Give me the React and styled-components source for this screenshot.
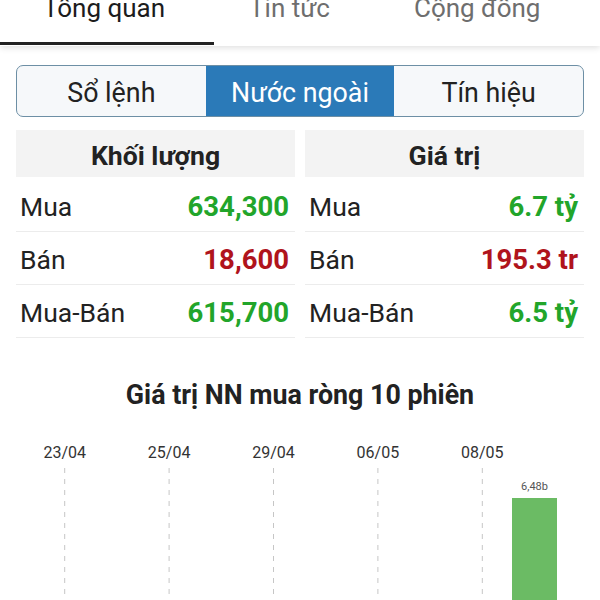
import React from "react";
import styled, { createGlobalStyle, css } from "styled-components";

const GlobalStyle = createGlobalStyle`
  html, body {
    margin: 0;
    padding: 0;
    background: #fff;
  }
  body {
    width: 600px;
    height: 600px;
    overflow: hidden;
    font-family: Roboto, "Noto Sans", "Liberation Sans", sans-serif;
    color: #222;
  }
`;

const TabBar = styled.div`
  position: relative;
  height: 46px;
  display: flex;
  align-items: flex-start;
  gap: 84px;
  padding-left: 43px;
  background: #fff;
  box-shadow: 0 2px 6px rgba(0, 0, 0, 0.12);
  overflow: hidden;
`;

const Tab = styled.div`
  position: relative;
  height: 46px;
  margin-top: -7px;
  font-size: 26px;
  line-height: 30px;
  white-space: nowrap;
  color: ${(props) => (props.active ? "#1c1c1c" : "#6e6e6e")};
  ${(props) =>
    props.active &&
    css`
      &::after {
        content: "";
        position: absolute;
        left: -43px;
        right: -49px;
        bottom: -6px;
        height: 3px;
        background: #222;
      }
    `}
`;

const Segmented = styled.div`
  margin: 19px 16px 0;
  height: 52px;
  box-sizing: border-box;
  border: 1.5px solid #6d8fa5;
  border-radius: 7px;
  overflow: hidden;
  background: #f6f8fa;
  display: grid;
  grid-template-columns: 1fr 1fr 1fr;
`;

const Segment = styled.div`
  display: flex;
  align-items: center;
  justify-content: center;
  padding-top: 3px;
  font-size: 26.8px;
  color: ${(props) => (props.active ? "#fff" : "#222")};
  background: ${(props) => (props.active ? "#2b7ab8" : "transparent")};
`;

const Tables = styled.div`
  margin: 13px 16px 0;
  display: grid;
  grid-template-columns: 1fr 1fr;
  column-gap: 10px;
`;

const Panel = styled.div`
  display: flex;
  flex-direction: column;
`;

const PanelHeader = styled.div`
  height: 47px;
  box-sizing: border-box;
  padding-top: 4px;
  margin-bottom: 2px;
  display: flex;
  align-items: center;
  justify-content: center;
  background: #f3f3f3;
  font-size: 26.6px;
  font-weight: 700;
  color: #222;
`;

const Row = styled.div`
  height: 53px;
  box-sizing: border-box;
  padding: 3px 6px 0 4px;
  display: flex;
  align-items: center;
  justify-content: space-between;
  border-bottom: 1px solid #ececec;
`;

const Label = styled.span`
  font-size: 26.5px;
  color: #222;
`;

const Value = styled.span`
  font-size: 27.5px;
  font-weight: 700;
  color: ${(props) => (props.tone === "up" ? "#22a52a" : "#b0141c")};
`;

const ChartTitle = styled.div`
  margin-top: 42px;
  text-align: center;
  font-size: 26.8px;
  line-height: 30px;
  font-weight: 700;
  color: #222;
`;

const ChartSvg = styled.svg`
  display: block;
  margin-top: 20px;
`;

const tabs = ["Tổng quan", "Tin tức", "Cộng đồng"];
const segments = ["Sổ lệnh", "Nước ngoài", "Tín hiệu"];

const tables = [
  {
    title: "Khối lượng",
    rows: [
      ["Mua", "634,300", "up"],
      ["Bán", "18,600", "down"],
      ["Mua-Bán", "615,700", "up"],
    ],
  },
  {
    title: "Giá trị",
    rows: [
      ["Mua", "6.7 tỷ", "up"],
      ["Bán", "195.3 tr", "down"],
      ["Mua-Bán", "6.5 tỷ", "up"],
    ],
  },
];

const dates = ["23/04", "25/04", "29/04", "06/05", "08/05"];
const slot = 52.2;
const firstSlot = 64.7;

const Chart = () => (
  <ChartSvg width="600" height="170" viewBox="0 0 600 170">
    {dates.map((d, i) => {
      const x = firstSlot + i * 2 * slot;
      return (
        <g key={d}>
          <text
            x={x}
            y="28"
            textAnchor="middle"
            fontSize="16"
            fill="#333"
            fontFamily="Roboto, sans-serif"
          >
            {d}
          </text>
          <line
            x1={x}
            x2={x}
            y1="38"
            y2="170"
            stroke="#c6c6c6"
            strokeWidth="1"
            strokeDasharray="5 6"
          />
        </g>
      );
    })}
    <text
      x={firstSlot + 9 * slot}
      y="60"
      textAnchor="middle"
      fontSize="11"
      fill="#555"
      fontFamily="Roboto, sans-serif"
    >
      6,48b
    </text>
    <rect x="512" y="68" width="45" height="110" fill="#6bbb64" />
  </ChartSvg>
);

export default function App() {
  return (
    <>
      <GlobalStyle />
      <TabBar>
        {tabs.map((t, i) => (
          <Tab key={t} active={i === 0}>
            {t}
          </Tab>
        ))}
      </TabBar>
      <Segmented>
        {segments.map((s, i) => (
          <Segment key={s} active={i === 1}>
            {s}
          </Segment>
        ))}
      </Segmented>
      <Tables>
        {tables.map((t) => (
          <Panel key={t.title}>
            <PanelHeader>{t.title}</PanelHeader>
            {t.rows.map(([label, value, tone]) => (
              <Row key={label}>
                <Label>{label}</Label>
                <Value tone={tone}>{value}</Value>
              </Row>
            ))}
          </Panel>
        ))}
      </Tables>
      <ChartTitle>Giá trị NN mua ròng 10 phiên</ChartTitle>
      <Chart />
    </>
  );
}
